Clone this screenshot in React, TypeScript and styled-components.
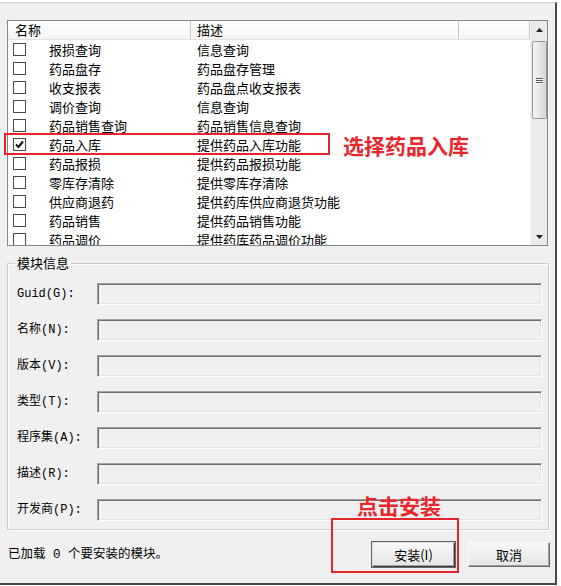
import React from "react";
import styled, { createGlobalStyle } from "styled-components";

const Global = createGlobalStyle`
  html, body { margin: 0; padding: 0; background: #ffffff; }
  body { font-family: "Noto Sans CJK SC", sans-serif; color: #000; }
  #root { width: 561px; height: 586px; overflow: hidden; }
`;

const Frame = styled.div`
  position: relative;
  box-sizing: border-box;
  width: 557px;
  height: 583px;
  margin-top: 2px;
  background: #f0f0f0;
  border-top: 1px solid #cfcfcf;
  border-right: 2px solid #4a4a4a;
  border-bottom: 2px solid #4a4a4a;
  padding: 17px 0 0 7px;
  display: flex;
  flex-direction: column;
`;

const ListBox = styled.div`
  box-sizing: border-box;
  width: 541px;
  height: 226px;
  border: 1px solid #828790;
  background: #fff;
  display: flex;
  overflow: hidden;
`;

const ListMain = styled.div`
  flex: 1;
  display: flex;
  flex-direction: column;
  overflow: hidden;
`;

const HeaderRow = styled.div`
  box-sizing: border-box;
  height: 19px;
  display: flex;
  background: linear-gradient(#ffffff, #f4f4f4);
  border-bottom: 1px solid #e2e2e2;
  flex: none;
`;

const HeaderCell = styled.div<{ $w?: number; $pl: number }>`
  box-sizing: border-box;
  ${(p) => (p.$w ? `width: ${p.$w}px; flex: none;` : "flex: 1;")}
  padding-left: ${(p) => p.$pl}px;
  border-right: 1px solid #c9c9c9;
  font-size: 13px;
  line-height: 18px;
  white-space: nowrap;
`;

const Row = styled.div`
  height: 19px;
  display: flex;
  align-items: center;
  flex: none;
  font-size: 13px;
  line-height: 19px;
  white-space: nowrap;
`;

const NameCell = styled.div`
  box-sizing: border-box;
  width: 183px;
  flex: none;
  display: flex;
  align-items: center;
  padding-left: 5px;
`;

const NameText = styled.span`
  margin-left: 23px;
`;

const DescCell = styled.div`
  padding-left: 6px;
`;

const Box = styled.span`
  box-sizing: border-box;
  width: 13px;
  height: 13px;
  border: 1px solid #4a4a4a;
  background: #fff;
  display: flex;
  align-items: center;
  justify-content: center;
  flex: none;
`;

const ScrollBar = styled.div`
  width: 17px;
  flex: none;
  display: flex;
  flex-direction: column;
  background: #eaeaea;
  border-left: 1px solid #f4f4f4;
  box-sizing: border-box;
`;

const ArrowBtn = styled.div`
  height: 17px;
  flex: none;
  display: flex;
  align-items: center;
  justify-content: center;
`;

const Track = styled.div`
  flex: 1;
  display: flex;
  flex-direction: column;
  align-items: center;
`;

const Thumb = styled.div`
  box-sizing: border-box;
  margin-top: 3px;
  width: 15px;
  height: 78px;
  border: 1px solid #979797;
  border-radius: 2px;
  background: linear-gradient(to right, #f5f5f5, #e6e6e6 50%, #d5d5d5);
  display: flex;
  flex-direction: column;
  align-items: center;
  justify-content: center;
  gap: 1px;
`;

const Grip = styled.span`
  width: 7px;
  height: 1px;
  background: #555;
  box-shadow: 0 1px 0 #fafafa;
`;

const Group = styled.div`
  position: relative;
  box-sizing: border-box;
  margin-top: 17px;
  width: 542px;
  height: 267px;
  border: 1px solid #cdcdcd;
  box-shadow: inset 1px 1px 0 #fff, 1px 1px 0 #fff;
  padding: 19px 6px 0 9px;
  display: grid;
  grid-template-columns: 80px 1fr;
  grid-auto-rows: 22px;
  row-gap: 14px;
  align-items: center;
`;

const Legend = styled.span`
  position: absolute;
  top: -9px;
  left: 7px;
  padding: 0 2px;
  background: #f0f0f0;
  font-size: 13px;
  line-height: 16px;
`;

const FieldLabel = styled.label`
  font-family: "Liberation Mono", "Noto Sans CJK SC", monospace;
  font-size: 12px;
  line-height: 16px;
  white-space: nowrap;
`;

const Field = styled.div`
  box-sizing: border-box;
  height: 22px;
  border: 1px solid;
  border-color: #a0a0a0 #ffffff #ffffff #a0a0a0;
  box-shadow: inset 1px 1px 0 #6d6d6d, inset -1px -1px 0 #e3e3e3;
  background: #f0f0f0;
`;

const Footer = styled.div`
  margin-top: 12px;
  width: 543px;
  display: flex;
  align-items: center;
  gap: 13px;
  padding-left: 1px;
  box-sizing: border-box;
`;

const Status = styled.div`
  flex: 1;
  font-family: "Liberation Mono", "Noto Sans CJK SC", monospace;
  font-size: 12.5px;
  line-height: 18px;
  white-space: pre;
`;

const Button = styled.button<{ $w: number; $default?: boolean }>`
  box-sizing: border-box;
  width: ${(p) => p.$w}px;
  height: 25px;
  padding: 0;
  font-family: "Noto Sans CJK SC", sans-serif;
  font-size: 13px;
  color: #000;
  background: linear-gradient(#f7f7f7, #e6e6e6);
  border: 1px solid;
  border-color: ${(p) =>
    p.$default ? "#e0e0e0 #3c3c3c #3c3c3c #e0e0e0" : "#fbfbfb #6a6a6a #6a6a6a #fbfbfb"};
  box-shadow: ${(p) =>
    p.$default
      ? "inset -1px -1px 0 #a0a0a0, 0 0 0 1px #646464"
      : "inset -1px -1px 0 #a0a0a0"};
`;

const RedBox = styled.div`
  position: absolute;
  box-sizing: border-box;
  border: 2px solid #e2262b;
`;

const RedLabel = styled.div`
  position: absolute;
  font-family: "Noto Sans CJK SC", sans-serif;
  font-weight: 700;
  font-size: 21px;
  line-height: 24px;
  color: #e8262c;
  white-space: nowrap;
`;

const rows: [string, string, boolean][] = [
  ["报损查询", "信息查询", false],
  ["药品盘存", "药品盘存管理", false],
  ["收支报表", "药品盘点收支报表", false],
  ["调价查询", "信息查询", false],
  ["药品销售查询", "药品销售信息查询", false],
  ["药品入库", "提供药品入库功能", true],
  ["药品报损", "提供药品报损功能", false],
  ["零库存清除", "提供零库存清除", false],
  ["供应商退药", "提供药库供应商退货功能", false],
  ["药品销售", "提供药品销售功能", false],
  ["药品调价", "提供药库药品调价功能", false],
];

const fields = [
  "Guid(G):",
  "名称(N):",
  "版本(V):",
  "类型(T):",
  "程序集(A):",
  "描述(R):",
  "开发商(P):",
];

const Check = () => (
  <svg width="9" height="9" viewBox="0 0 9 9">
    <path d="M1 4.5 L3.5 7 L8 1.5" fill="none" stroke="#111" strokeWidth="2" />
  </svg>
);

const Tri = ({ down }: { down?: boolean }) => (
  <svg width="7" height="4" viewBox="0 0 7 4">
    <path d={down ? "M0 0 H7 L3.5 4 Z" : "M0 4 H7 L3.5 0 Z"} fill="#222" />
  </svg>
);

export default function App() {
  return (
    <>
      <Global />
      <Frame>
        <ListBox>
          <ListMain>
            <HeaderRow>
              <HeaderCell $w={183} $pl={7}>名称</HeaderCell>
              <HeaderCell $w={268} $pl={6}>描述</HeaderCell>
              <HeaderCell $pl={0} />
            </HeaderRow>
            {rows.map(([name, desc, checked]) => (
              <Row key={name}>
                <NameCell>
                  <Box>{checked && <Check />}</Box>
                  <NameText>{name}</NameText>
                </NameCell>
                <DescCell>{desc}</DescCell>
              </Row>
            ))}
          </ListMain>
          <ScrollBar>
            <ArrowBtn>
              <Tri />
            </ArrowBtn>
            <Track>
              <Thumb>
                <Grip />
                <Grip />
                <Grip />
              </Thumb>
            </Track>
            <ArrowBtn>
              <Tri down />
            </ArrowBtn>
          </ScrollBar>
        </ListBox>

        <Group>
          <Legend>模块信息</Legend>
          {fields.map((f) => (
            <React.Fragment key={f}>
              <FieldLabel>{f}</FieldLabel>
              <Field />
            </React.Fragment>
          ))}
        </Group>

        <Footer>
          <Status>已加载 0 个要安装的模块。</Status>
          <Button $w={83} $default>
            安装(I)
          </Button>
          <Button $w={82}>取消</Button>
        </Footer>

        <RedBox style={{ left: 4, top: 130, width: 326, height: 22 }} />
        <RedLabel style={{ left: 343, top: 130 }}>选择药品入库</RedLabel>
        <RedBox style={{ left: 331, top: 515, width: 128, height: 55 }} />
        <RedLabel style={{ left: 357, top: 490 }}>点击安装</RedLabel>
      </Frame>
    </>
  );
}
